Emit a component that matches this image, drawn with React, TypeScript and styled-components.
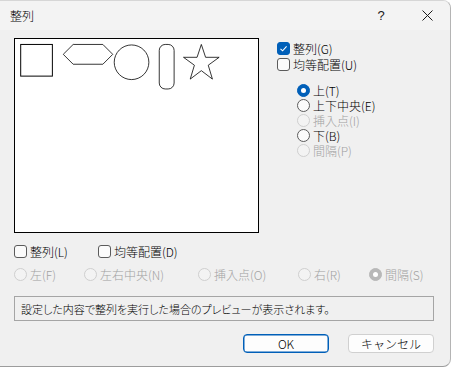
import styled, { createGlobalStyle } from 'styled-components';

const GlobalStyle = createGlobalStyle`
  html, body {
    margin: 0;
    padding: 0;
    background: #ffffff;
  }
  body {
    font-family: "Noto Sans CJK JP", "Noto Sans", sans-serif;
    font-size: 12px;
    font-weight: 300;
    color: #000;
  }
`;

const Window = styled.div`
  width: 450px;
  height: 365px;
  background: #f0f0f0;
  border-right: 1px solid #b4b4b4;
  border-bottom: 1px solid #9c9c9c;
  border-top: 1px solid #d6d6d6;
  border-radius: 0 8px 8px 0;
  overflow: hidden;
  display: flex;
  flex-direction: column;
`;

const TitleBar = styled.div`
  height: 29px;
  display: flex;
  align-items: center;
  padding: 0 0 0 10px;
  background: #f3f3f3;
`;

const Title = styled.div`
  flex: 1;
  font-size: 12px;
  line-height: 16px;
`;

const TitleButton = styled.div<{ $w: number }>`
  width: ${({ $w }) => $w}px;
  height: 29px;
  display: flex;
  align-items: center;
  justify-content: center;
  font-family: "Liberation Sans", sans-serif;
  font-size: 13px;
  color: #1a1a1a;
`;

const Body = styled.div`
  padding: 8px 16px 0 14px;
  display: flex;
  flex-direction: column;
`;

const TopRow = styled.div`
  display: flex;
`;

const Preview = styled.svg`
  display: block;
  width: 245px;
  height: 195px;
  box-sizing: border-box;
  border: 1px solid #000;
  background: #fff;
`;

const SidePanel = styled.div`
  margin-left: 18px;
  padding-top: 2px;
  display: flex;
  flex-direction: column;
`;

const RadioColumn = styled.div`
  margin: 11px 0 0 20px;
  display: flex;
  flex-direction: column;
`;

const Option = styled.label<{ $h?: number; $w?: number; $disabled?: boolean }>`
  height: ${({ $h }) => $h ?? 16}px;
  ${({ $w }) => ($w ? `width: ${$w}px;` : '')}
  display: flex;
  align-items: center;
  gap: 3px;
  white-space: nowrap;
  line-height: 13px;
  color: ${({ $disabled }) => ($disabled ? '#a2a2a2' : '#000')};
`;

const Box = styled.span<{ $checked?: boolean }>`
  width: 13px;
  height: 13px;
  box-sizing: border-box;
  border-radius: 3px;
  flex-shrink: 0;
  display: inline-flex;
  align-items: center;
  justify-content: center;
  border: 1px solid ${({ $checked }) => ($checked ? '#005fb8' : '#5b5b5b')};
  background: ${({ $checked }) => ($checked ? '#005fb8' : '#fbfbfb')};
`;

const Dot = styled.span<{ $checked?: boolean; $disabled?: boolean }>`
  width: 13px;
  height: 13px;
  box-sizing: border-box;
  border-radius: 50%;
  flex-shrink: 0;
  display: inline-flex;
  align-items: center;
  justify-content: center;
  border: 1px solid
    ${({ $checked, $disabled }) =>
      $disabled ? ($checked ? '#b8b8b8' : '#cfcfcf') : $checked ? '#005fb8' : '#5b5b5b'};
  background: ${({ $checked, $disabled }) =>
    $checked ? ($disabled ? '#b8b8b8' : '#005fb8') : $disabled ? '#f3f3f3' : '#fbfbfb'};

  &::after {
    content: '';
    display: ${({ $checked }) => ($checked ? 'block' : 'none')};
    width: 5px;
    height: 5px;
    border-radius: 50%;
    background: #fff;
  }
`;

const CheckRow = styled.div`
  margin-top: 10px;
  display: flex;
`;

const RadioRow = styled.div`
  margin-top: 7px;
  display: flex;
`;

const StatusBox = styled.div`
  margin-top: 14px;
  height: 25px;
  box-sizing: border-box;
  border: 1px solid #a5a5a5;
  padding: 0 6px;
  display: flex;
  align-items: center;
  font-size: 11px;
  font-feature-settings: "palt";
`;

const ButtonRow = styled.div`
  margin-top: 13px;
  display: flex;
  justify-content: flex-end;
  gap: 19px;
`;

const Button = styled.button<{ $primary?: boolean }>`
  width: 86px;
  height: 19px;
  box-sizing: border-box;
  padding: 0;
  border-radius: 4px;
  border: 1px solid ${({ $primary }) => ($primary ? '#005fb8' : '#d0d0d0')};
  box-shadow: ${({ $primary }) => ($primary ? 'inset 0 0 0 0.5px #005fb8' : 'none')};
  background: #fdfdfd;
  font-family: "Noto Sans CJK JP", "Noto Sans", sans-serif;
  font-size: 12px;
  font-weight: 300;
  line-height: 14px;
  color: #000;
`;

function Check({ label, checked, w }: { label: string; checked?: boolean; w?: number }) {
  return (
    <Option $w={w}>
      <Box $checked={checked}>
        {checked ? (
          <svg width="9" height="9" viewBox="0 0 9 9">
            <path d="M1.5 4.8 L3.6 6.8 L7.6 2.3" fill="none" stroke="#fff" strokeWidth="1.1" />
          </svg>
        ) : null}
      </Box>
      {label}
    </Option>
  );
}

function Radio({
  label,
  checked,
  disabled,
  w,
  h,
}: {
  label: string;
  checked?: boolean;
  disabled?: boolean;
  w?: number;
  h?: number;
}) {
  return (
    <Option $w={w} $h={h} $disabled={disabled}>
      <Dot $checked={checked} $disabled={disabled} />
      {label}
    </Option>
  );
}

export default function App() {
  return (
    <>
      <GlobalStyle />
      <Window>
        <TitleBar>
          <Title>整列</Title>
          <TitleButton $w={46}>?</TitleButton>
          <TitleButton $w={46}>
            <svg width="11" height="11" viewBox="0 0 11 11">
              <path d="M0.5 0.5 L10.5 10.5 M10.5 0.5 L0.5 10.5" stroke="#1a1a1a" strokeWidth="1" />
            </svg>
          </TitleButton>
        </TitleBar>

        <Body>
          <TopRow>
            <Preview viewBox="0 0 245 195">
              <g fill="none" stroke="#000" strokeWidth="1">
                <rect x="5.5" y="5.5" width="32" height="32" />
                <polygon points="48.5,15.5 58.5,5.5 88.5,5.5 98.5,15.5 88.5,25.5 58.5,25.5" strokeWidth="0.8" />
                <circle cx="117.5" cy="23.5" r="17.5" strokeWidth="0.8" />
                <rect x="145.5" y="5.5" width="15" height="45" rx="6" strokeWidth="0.8" />
                <polygon
                  points="188,5.5 192.3,18.5 206,18.5 195,26.5 199.2,40.5 188,32 176.8,40.5 181,26.5 170,18.5 183.7,18.5"
                  strokeWidth="0.8"
                />
              </g>
            </Preview>

            <SidePanel>
              <Check label="整列(G)" checked />
              <Check label="均等配置(U)" />
              <RadioColumn>
                <Radio h={15} label="上(T)" checked />
                <Radio h={15} label="上下中央(E)" />
                <Radio h={15} label="挿入点(I)" disabled />
                <Radio h={15} label="下(B)" />
                <Radio h={15} label="間隔(P)" disabled />
              </RadioColumn>
            </SidePanel>
          </TopRow>

          <CheckRow>
            <Check w={84} label="整列(L)" />
            <Check label="均等配置(D)" />
          </CheckRow>

          <RadioRow>
            <Radio w={70} label="左(F)" disabled />
            <Radio w={114} label="左右中央(N)" disabled />
            <Radio w={100} label="挿入点(O)" disabled />
            <Radio w={71} label="右(R)" disabled />
            <Radio label="間隔(S)" checked disabled />
          </RadioRow>

          <StatusBox>設定した内容で整列を実行した場合のプレビューが表示されます。</StatusBox>

          <ButtonRow>
            <Button $primary>OK</Button>
            <Button>キャンセル</Button>
          </ButtonRow>
        </Body>
      </Window>
    </>
  );
}
